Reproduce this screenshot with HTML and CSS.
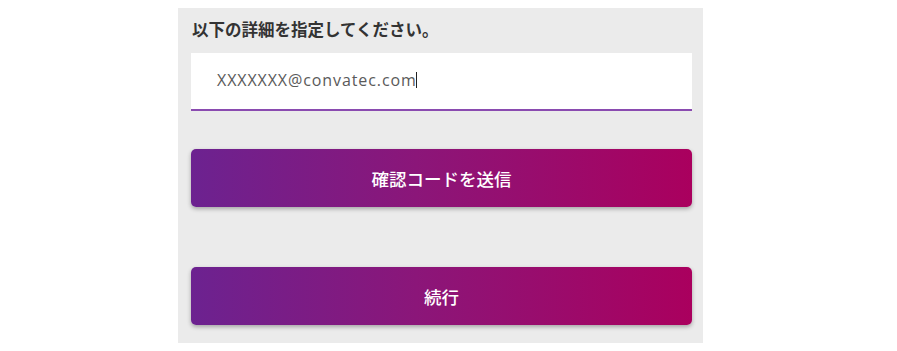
FILE: index.html
```html
<!DOCTYPE html>
<html lang="ja">
<head>
<meta charset="utf-8">
<link rel="stylesheet" href="styles.css">
</head>
<body>
<div class="page">
  <div class="panel">
    <div class="title">以下の詳細を指定してください。</div>
    <div class="field"><span class="value">XXXXXXX@convatec.com</span><span class="caret"></span></div>
    <button class="btn btn-send">確認コードを送信</button>
    <button class="btn btn-next">続行</button>
  </div>
</div>
</body>
</html>
```
FILE: styles.css
```css
html, body {
  margin: 0;
  padding: 0;
  background: #ffffff;
}
.page {
  display: flex;
  justify-content: flex-start;
  padding: 8px 0 0 178px;
}
.panel {
  width: 525px;
  height: 335px;
  box-sizing: border-box;
  background: #ebebeb;
  padding: 10px 11px 0 13px;
  display: flex;
  flex-direction: column;
}
.title {
  font-family: "Noto Sans CJK JP", "Noto Sans", sans-serif;
  font-weight: 700;
  font-size: 16.5px;
  line-height: 22px;
  color: #333333;
  margin-left: 1px;
}
.field {
  margin-top: 13px;
  background: #ffffff;
  border-bottom: 2px solid #8a4bb0;
  display: flex;
  align-items: center;
  padding-left: 26px;
  padding-bottom: 2px;
  box-sizing: border-box;
  height: 58px;
}
.value {
  font-family: "Open Sans", "Noto Sans", sans-serif;
  font-size: 16px;
  color: #5a5a5a;
  letter-spacing: 0.9px;
}
.caret {
  display: inline-block;
  width: 1px;
  height: 16px;
  background: #222;
  margin-left: -1px;
}
.btn {
  height: 58px;
  border: none;
  border-radius: 5px;
  background: linear-gradient(90deg, #6c2290 0%, #8b1679 45%, #aa005e 100%);
  color: #ffffff;
  font-family: "Noto Sans CJK JP", "Noto Sans", sans-serif;
  font-size: 17.5px;
  font-weight: 500;
  box-shadow: 0 2px 4px rgba(0, 0, 0, 0.3);
  width: 100%;
  padding: 0;
}
.btn-send {
  margin-top: 38px;
}
.btn-next {
  margin-top: 60px;
}
```
